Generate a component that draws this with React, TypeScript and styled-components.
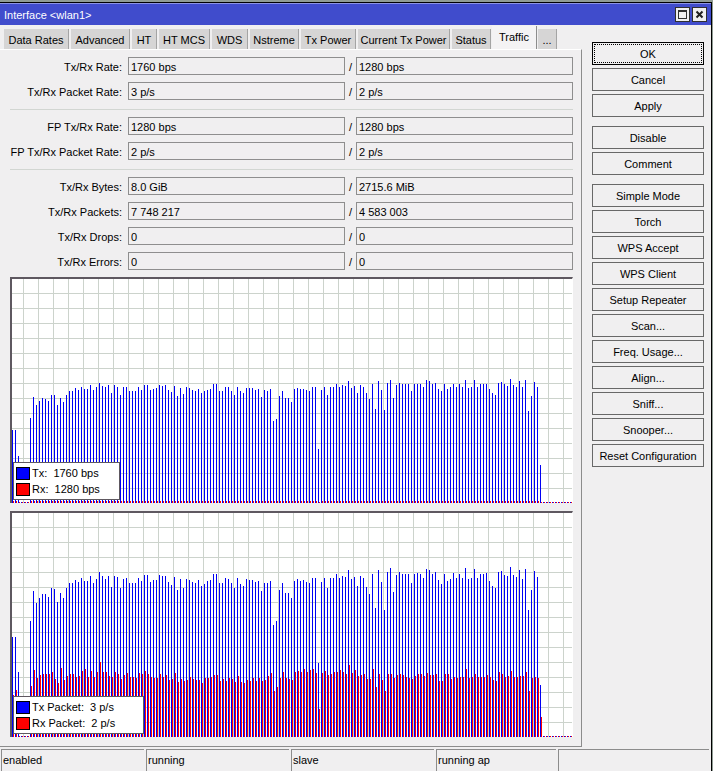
import React from "react";
import styled, { createGlobalStyle, css } from "styled-components";

const GlobalStyle = createGlobalStyle`
  *, *::before, *::after { box-sizing: border-box; }
  body {
    margin: 0;
    background: #909c94;
    color: #000;
    font: 11px/16px "Liberation Sans", Arial, sans-serif;
  }
  button, input { font: inherit; color: inherit; }
`;

const WindowFrame = styled.div`
  display: flex;
  flex-direction: column;
  min-height: calc(100vh - 2px);
  margin: 2px 1px 0 0;
  border-top: 1px solid #000;
  border-right: 1px solid #000;
  background: #f0eff0;
`;

const TitleBar = styled.header`
  display: flex;
  align-items: center;
  gap: 2px;
  height: 22px;
  padding: 0 4px;
  border-top: 1px solid #8c94e4;
  background: #404ccc;
  color: #fff;
`;

const Title = styled.h1`
  flex: 1;
  margin: 0;
  font-size: 11px;
  font-weight: 400;
`;

const TitleButton = styled.button`
  display: grid;
  place-items: center;
  width: 15px;
  height: 15px;
  padding: 0;
  border: 1px solid #303030;
  background: #f0f0f0;
`;

const Body = styled.div`
  display: flex;
  flex: 1;
`;

const Main = styled.main`
  display: flex;
  flex: 1;
  flex-direction: column;
  min-width: 0;
`;

const TabList = styled.div`
  display: flex;
  align-items: flex-end;
  gap: 2px;
  height: 24px;
  padding-left: 4px;
`;

const Tab = styled.button<{ $width: number; $active?: boolean }>`
  flex: none;
  width: ${(p) => p.$width}px;
  height: 20px;
  padding: 2px 0 0;
  border: 0;
  border-right: 1px solid #a4a4a4;
  background: #d6d5d5;
  white-space: nowrap;
  ${(p) =>
    p.$active &&
    css`
      height: 23px;
      padding: 0 0 2px;
      margin: 0 -1px;
      border-right-color: #8c8c8c;
      background: #f4f3f4;
    `}
`;

const Panel = styled.section`
  flex: 1;
  padding: 7px 8px 0 10px;
  border-top: 1px solid #fff;
  border-right: 1px solid #8c8c8c;
  border-bottom: 1px solid #8c8c8c;
`;

const FieldGroup = styled.div`
  display: flex;
  flex-direction: column;
  gap: 7px;
  & + & {
    margin-top: 9px;
    padding-top: 7px;
    border-top: 1px solid #d2d6d2;
  }
`;

const FieldRow = styled.div`
  display: grid;
  grid-template-columns: 118px 1fr 11px 1fr;
  height: 18px;
  line-height: 20px;
`;

const FieldLabel = styled.label`
  padding-right: 6px;
  text-align: right;
  white-space: nowrap;
`;

const Slash = styled.span`
  padding-left: 4px;
`;

const Field = styled.input`
  width: 100%;
  min-width: 0;
  height: 18px;
  padding: 1px 2px 0;
  border: 1px solid #8e8e8e;
  background: #f0eff0;
`;

const ChartBox = styled.figure`
  position: relative;
  height: 226px;
  margin: 7px 0 8px;
  border: solid #5e5860;
  border-width: 2px 1px 0 2px;
  border-right-color: #fff;
  background: #fff;
  & + & { margin-top: 0; }
`;

const Plot = styled.svg`
  display: block;
  width: 100%;
  height: 224px;
  shape-rendering: crispEdges;
`;

const Legend = styled.figcaption<{ $width: number }>`
  position: absolute;
  left: 1px;
  bottom: 3px;
  width: ${(p) => p.$width}px;
  padding: 2px;
  border: 1px solid #5e5860;
  background: #fff;
`;

const LegendRow = styled.div`
  display: flex;
  align-items: center;
  gap: 2px;
  height: 16px;
  white-space: pre;
`;

const Swatch = styled.span<{ $color: string }>`
  width: 14px;
  height: 13px;
  border: 1px solid #000;
  background: ${(p) => p.$color};
`;

const Sidebar = styled.aside`
  display: flex;
  flex-direction: column;
  gap: 9px;
  padding: 17px 7px 0 10px;
`;

const ButtonGroup = styled.div`
  display: flex;
  flex-direction: column;
  gap: 3px;
`;

const ActionButton = styled.button<{ $primary?: boolean }>`
  width: 112px;
  height: 23px;
  padding: 0;
  border: 1px solid #686868;
  background: #f0eff0;
  white-space: nowrap;
  ${(p) =>
    p.$primary &&
    css`
      border-color: #000;
      outline: 1px dotted #000;
      outline-offset: -3px;
    `}
`;

const StatusBar = styled.footer`
  display: grid;
  grid-template-columns: 145fr 145fr 145fr 122fr 153fr;
  padding: 2px 0 0 1px;
`;

const StatusCell = styled.div`
  height: 22px;
  margin-right: 2px;
  padding: 2px 1px;
  border-top: 1px solid #8c8c8c;
  border-left: 1px solid #8c8c8c;
`;

const TABS: { label: string; width: number; active?: boolean }[] = [
  { label: "Data Rates", width: 65 },
  { label: "Advanced", width: 59 },
  { label: "HT", width: 25 },
  { label: "HT MCS", width: 51 },
  { label: "WDS", width: 36 },
  { label: "Nstreme", width: 49 },
  { label: "Tx Power", width: 55 },
  { label: "Current Tx Power", width: 92 },
  { label: "Status", width: 39 },
  { label: "Traffic", width: 45, active: true },
  { label: "...", width: 19 },
];

const FIELD_GROUPS = [
  [
    ["Tx/Rx Rate:", "1760 bps", "1280 bps"],
    ["Tx/Rx Packet Rate:", "3 p/s", "2 p/s"],
  ],
  [
    ["FP Tx/Rx Rate:", "1280 bps", "1280 bps"],
    ["FP Tx/Rx Packet Rate:", "2 p/s", "2 p/s"],
  ],
  [
    ["Tx/Rx Bytes:", "8.0 GiB", "2715.6 MiB"],
    ["Tx/Rx Packets:", "7 748 217", "4 583 003"],
    ["Tx/Rx Drops:", "0", "0"],
    ["Tx/Rx Errors:", "0", "0"],
  ],
];

const ACTIONS = [
  ["OK", "Cancel", "Apply"],
  ["Disable", "Comment"],
  [
    "Simple Mode",
    "Torch",
    "WPS Accept",
    "WPS Client",
    "Setup Repeater",
    "Scan...",
    "Freq. Usage...",
    "Align...",
    "Sniff...",
    "Snooper...",
    "Reset Configuration",
  ],
];

const STATUS = ["enabled", "running", "slave", "running ap", ""];

const SAMPLES = 187;

const TX_BITS = [
  73, 73, 47, 0, 0, 0, 85, 106, 98, 102, 105, 104, 102, 108, 108, 98, 105, 101, 108, 112,
  112, 115, 113, 116, 114, 114, 118, 113, 116, 120, 117, 116, 118, 110, 118, 116, 108, 116, 116, 112,
  112, 112, 116, 113, 118, 118, 113, 114, 115, 118, 117, 118, 113, 111, 117, 107, 115, 109, 116, 115,
  113, 112, 114, 110, 112, 113, 114, 119, 119, 112, 112, 116, 116, 112, 108, 116, 112, 110, 115, 115,
  115, 113, 114, 106, 113, 112, 114, 82, 84, 107, 112, 105, 105, 101, 114, 115, 114, 114, 113, 112,
  116, 116, 54, 113, 116, 108, 116, 116, 119, 116, 118, 117, 122, 115, 117, 110, 118, 116, 110, 104,
  119, 94, 122, 113, 93, 120, 123, 105, 118, 120, 119, 119, 119, 112, 119, 119, 119, 116, 123, 122,
  119, 120, 114, 112, 119, 114, 116, 119, 116, 119, 116, 123, 115, 116, 123, 116, 119, 119, 119, 114,
  110, 108, 120, 121, 119, 117, 124, 118, 116, 122, 116, 123, 92, 107, 121, 116, 38,
];

const RX_BITS = TX_BITS.map((v) => (v > 60 ? 2 : 1));

const TX_PACKETS = [
  100, 100, 65, 0, 0, 0, 116, 146, 134, 139, 143, 143, 140, 149, 148, 135, 144, 139, 149, 154,
  154, 157, 155, 159, 156, 156, 161, 154, 158, 165, 161, 158, 161, 150, 161, 160, 149, 158, 159, 154,
  154, 154, 159, 156, 162, 162, 155, 157, 157, 162, 161, 161, 155, 152, 160, 147, 158, 149, 158, 157,
  155, 154, 157, 151, 153, 156, 157, 163, 163, 154, 154, 159, 158, 154, 149, 159, 153, 151, 158, 157,
  157, 155, 156, 146, 154, 154, 156, 112, 116, 147, 154, 144, 144, 139, 156, 158, 156, 157, 155, 154,
  159, 159, 74, 155, 159, 149, 159, 159, 163, 159, 161, 160, 167, 158, 160, 151, 161, 159, 150, 143,
  163, 129, 167, 155, 127, 165, 169, 145, 162, 165, 163, 163, 163, 154, 163, 164, 163, 159, 168, 167,
  163, 165, 157, 153, 163, 156, 158, 164, 159, 163, 159, 169, 158, 159, 168, 159, 163, 163, 164, 156,
  151, 149, 165, 166, 162, 161, 170, 162, 160, 167, 158, 168, 127, 147, 166, 160, 52,
];

const RX_PACKETS = [
  42, 47, 0, 0, 0, 0, 51, 67, 59, 62, 63, 63, 63, 65, 58, 54, 69, 57, 61, 63,
  63, 60, 61, 66, 68, 60, 66, 60, 65, 75, 65, 65, 61, 60, 65, 63, 58, 62, 64, 60,
  60, 59, 64, 63, 66, 63, 60, 59, 59, 63, 60, 62, 57, 58, 64, 55, 58, 56, 57, 60,
  58, 57, 57, 54, 59, 59, 60, 62, 62, 56, 58, 56, 59, 58, 55, 61, 55, 54, 57, 56,
  59, 56, 59, 56, 57, 61, 64, 46, 50, 59, 65, 59, 58, 57, 65, 66, 65, 68, 65, 67,
  68, 64, 28, 64, 66, 62, 63, 65, 65, 67, 65, 63, 72, 64, 67, 61, 62, 63, 58, 58,
  68, 50, 63, 57, 46, 63, 63, 59, 62, 63, 62, 60, 59, 58, 61, 63, 63, 61, 64, 62,
  62, 63, 56, 56, 63, 63, 58, 60, 59, 60, 60, 68, 59, 60, 63, 60, 60, 60, 62, 60,
  57, 56, 65, 63, 60, 61, 66, 60, 60, 61, 61, 65, 46, 59, 60, 59, 20,
];

const PLOT_HEIGHT = 224;

function barPath(values: number[], offset: number) {
  let d = "";
  for (let i = 0; i < SAMPLES; i += 1) {
    const h = Math.max(values[i] ?? 0, 1);
    d += `M${i * 3 + offset} ${PLOT_HEIGHT - h}h1v${h}h-1z`;
  }
  return d;
}

type ChartProps = {
  id: string;
  tx: number[];
  rx: number[];
  legend: [string, string];
  legendWidth: number;
};

function Chart({ id, tx, rx, legend, legendWidth }: ChartProps) {
  return (
    <ChartBox>
      <Plot role="img" aria-label={legend.join(", ")}>
        <defs>
          <pattern id={id} x="11" y="14" width="15" height="15" patternUnits="userSpaceOnUse">
            <path d="M0 0h15v1h-14v14h-1z" fill="#ccd3cc" />
          </pattern>
        </defs>
        <rect width="100%" height="100%" fill={`url(#${id})`} />
        <path d={barPath(tx, 0)} fill="#0000f4" />
        <path d={barPath(rx, 1)} fill="#ff0000" />
      </Plot>
      <Legend $width={legendWidth}>
        <LegendRow>
          <Swatch $color="#0000ff" />
          {legend[0]}
        </LegendRow>
        <LegendRow>
          <Swatch $color="#ff0000" />
          {legend[1]}
        </LegendRow>
      </Legend>
    </ChartBox>
  );
}

export default function App() {
  return (
    <>
      <GlobalStyle />
      <WindowFrame>
        <TitleBar>
          <Title>Interface &lt;wlan1&gt;</Title>
          <TitleButton aria-label="Maximize">
            <svg width="9" height="9" viewBox="0 0 9 9" shapeRendering="crispEdges">
              <path d="M0 0h9v9h-9zM1 2v6h7v-6z" fill="#303030" fillRule="evenodd" />
            </svg>
          </TitleButton>
          <TitleButton aria-label="Close">
            <svg width="9" height="9" viewBox="0 0 9 9">
              <path d="M1.5 1.5l6 6M7.5 1.5l-6 6" stroke="#202020" strokeWidth="2" />
            </svg>
          </TitleButton>
        </TitleBar>
        <Body>
          <Main>
            <TabList role="tablist">
              {TABS.map((tab) => (
                <Tab
                  key={tab.label}
                  role="tab"
                  aria-selected={!!tab.active}
                  $width={tab.width}
                  $active={tab.active}
                >
                  {tab.label}
                </Tab>
              ))}
            </TabList>
            <Panel role="tabpanel">
              {FIELD_GROUPS.map((group) => (
                <FieldGroup key={group[0][0]}>
                  {group.map(([label, tx, rx]) => (
                    <FieldRow key={label}>
                      <FieldLabel htmlFor={label}>{label}</FieldLabel>
                      <Field id={label} defaultValue={tx} readOnly />
                      <Slash>/</Slash>
                      <Field aria-label={`${label} Rx`} defaultValue={rx} readOnly />
                    </FieldRow>
                  ))}
                </FieldGroup>
              ))}
              <Chart
                id="grid-bits"
                tx={TX_BITS}
                rx={RX_BITS}
                legend={["Tx:  1760 bps", "Rx:  1280 bps"]}
                legendWidth={107}
              />
              <Chart
                id="grid-packets"
                tx={TX_PACKETS}
                rx={RX_PACKETS}
                legend={["Tx Packet:  3 p/s", "Rx Packet:  2 p/s"]}
                legendWidth={131}
              />
            </Panel>
          </Main>
          <Sidebar>
            {ACTIONS.map((group) => (
              <ButtonGroup key={group[0]}>
                {group.map((label) => (
                  <ActionButton key={label} $primary={label === "OK"}>
                    {label}
                  </ActionButton>
                ))}
              </ButtonGroup>
            ))}
          </Sidebar>
        </Body>
        <StatusBar>
          {STATUS.map((text, i) => (
            <StatusCell key={i}>{text}</StatusCell>
          ))}
        </StatusBar>
      </WindowFrame>
    </>
  );
}
